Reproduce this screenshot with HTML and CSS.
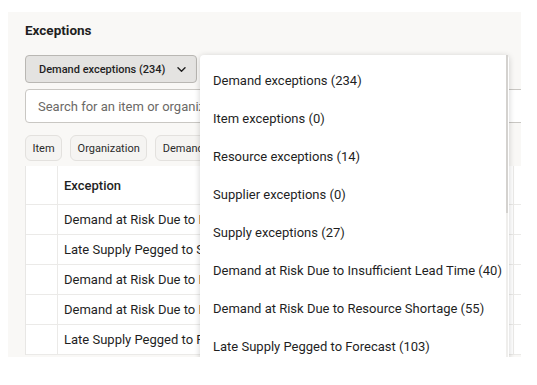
FILE: index.html
```html
<!DOCTYPE html>
<html>
<head>
<meta charset="utf-8">
<link rel="stylesheet" href="styles.css">
</head>
<body>
<div class="panel">
  <h2 class="title">Exceptions</h2>
  <div class="toolbar">
    <button class="select-btn"><span>Demand exceptions (234)</span>
      <svg class="chev" width="9" height="5" viewBox="0 0 9 5"><path d="M1 0.8l3.5 3.4 3.5-3.4" fill="none" stroke="#1f1f1f" stroke-width="1.4" stroke-linecap="round" stroke-linejoin="round"/></svg>
    </button>
  </div>
  <div class="search">Search for an item or organization</div>
  <div class="chips">
    <span class="chip">Item</span>
    <span class="chip">Organization</span>
    <span class="chip">Demand</span>
    <span class="chip">Supply</span>
    <span class="chip">Resource</span>
    <span class="chip">Shipment</span>
  </div>
  <div class="table">
    <div class="row head"><div class="c0"></div><div class="c1">Exception</div><div class="c2"></div></div>
    <div class="row"><div class="c0"></div><div class="c1">Demand at Risk Due to Insufficient Lead Time</div><div class="c2"></div></div>
    <div class="row"><div class="c0"></div><div class="c1">Late Supply Pegged to Sales Order</div><div class="c2"></div></div>
    <div class="row"><div class="c0"></div><div class="c1">Demand at Risk Due to Insufficient Lead Time</div><div class="c2"></div></div>
    <div class="row"><div class="c0"></div><div class="c1">Demand at Risk Due to Insufficient Lead Time</div><div class="c2"></div></div>
    <div class="row"><div class="c0"></div><div class="c1">Late Supply Pegged to Forecast</div><div class="c2"></div></div>
  </div>
  <div class="menu">
    <ul class="menu-list">
      <li>Demand exceptions (234)</li>
      <li>Item exceptions (0)</li>
      <li>Resource exceptions (14)</li>
      <li>Supplier exceptions (0)</li>
      <li>Supply exceptions (27)</li>
      <li>Demand at Risk Due to Insufficient Lead Time (40)</li>
      <li>Demand at Risk Due to Resource Shortage (55)</li>
      <li>Late Supply Pegged to Forecast (103)</li>
    </ul>
    <div class="scroll-track"><div class="scroll-thumb"></div></div>
  </div>
</div>
</body>
</html>
```
FILE: styles.css
```css
* { box-sizing: border-box; }
body {
  margin: 0;
  background: #ffffff;
  font-family: Roboto, "Noto Sans", sans-serif;
  color: #1f1f1f;
}
.panel {
  position: relative;
  margin: 12px 0 0 8px;
  width: 513px;
  height: 345px;
  background: #f9f8f6;
  overflow: hidden;
  padding: 9px 0 0 17px;
}
.title {
  margin: 0;
  font-size: 13.5px;
  font-weight: 700;
  line-height: 18px;
  height: 18px;
}
.toolbar {
  margin-top: 16px;
  display: flex;
}
.select-btn {
  display: flex;
  align-items: center;
  justify-content: space-between;
  height: 28px;
  width: 172px;
  padding: 0 10px 0 13px;
  background: #e4e3e1;
  border: 1px solid #b9b7b3;
  border-radius: 4px;
  font-family: inherit;
  font-size: 11px;
  font-weight: 500;
  color: #1f1f1f;
  white-space: nowrap;
}
.search {
  margin-top: 6px;
  width: 640px;
  height: 34px;
  background: #fff;
  border: 1px solid #c9c7c3;
  border-radius: 4px;
  padding-left: 12px;
  display: flex;
  align-items: center;
  font-size: 13px;
  color: #6b6966;
  white-space: nowrap;
}
.chips {
  margin-top: 12px;
  display: flex;
  gap: 8px;
  width: 700px;
}
.chip {
  flex: none;
  height: 26px;
  padding: 0 6.5px;
  display: flex;
  align-items: center;
  border: 1px solid #e3e1de;
  background: #f5f4f2;
  border-radius: 6px;
  font-size: 11px;
  color: #2b2b2b;
}
.table {
  margin-top: 5px;
  width: 800px;
  background: #fff;
  border-left: 1px solid #e8e7e5;
}
.row {
  display: flex;
  height: 30px;
  border-bottom: 1px solid #ebeae8;
  font-size: 13px;
  align-items: stretch;
}
.row.head {
  height: 39px;
  font-weight: 500;
}
.c0 { width: 32px; border-right: 1px solid #ebeae8; }
.c1 {
  width: 456px;
  padding-left: 6px;
  display: flex;
  align-items: center;
  white-space: nowrap;
  overflow: hidden;
  border-right: 1px solid #ebeae8;
}
.c2 { flex: 1; }
.menu {
  position: absolute;
  left: 192px;
  top: 43px;
  width: 309px;
  height: 320px;
  background: #fff;
  border-radius: 4px;
  box-shadow: 0 1px 6px rgba(0,0,0,0.18);
}
.menu-list {
  list-style: none;
  margin: 0;
  padding: 6px 0 0 0;
}
.menu-list li {
  height: 38px;
  display: flex;
  align-items: center;
  padding-left: 13px;
  font-size: 13px;
  white-space: nowrap;
}
.scroll-track {
  position: absolute;
  right: 1px;
  top: 0;
  bottom: 0;
  width: 2px;
  background: #efeeec;
}
.scroll-thumb {
  height: 158px;
  background: #d4d2cf;
}
```
